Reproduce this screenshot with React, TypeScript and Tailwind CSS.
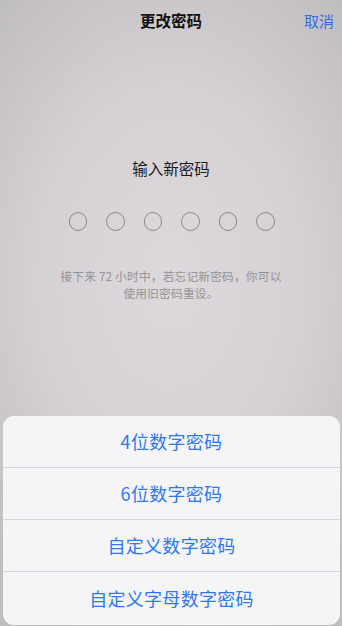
import React from 'react';

const options = ['4位数字密码', '6位数字密码', '自定义数字密码', '自定义字母数字密码'];

export default function App() {
  return (
    <div
      className="relative w-[342px] h-[626px] overflow-hidden bg-[radial-gradient(ellipse_75%_60%_at_50%_45%,#dcd8db_0%,#d5d1d4_50%,#c0bdc1_100%)]"
      style={{ fontFamily: '"Noto Sans CJK SC", "Noto Sans", sans-serif' }}
    >
      {/* nav bar */}
      <div className="relative h-[42px] flex items-center justify-center">
        <span className="text-[15.5px] font-semibold text-[#111] leading-none">更改密码</span>
        <span className="absolute right-[8px] top-[13px] text-[15px] text-[#2f6fe3] leading-none">取消</span>
      </div>

      <div className="flex flex-col items-center pt-[116px]">
        <div className="text-[15.5px] text-[#1a1a1a] leading-[20px]">输入新密码</div>
        <div className="flex gap-[19px] mt-[34px] ml-[1px]">
          {[0, 1, 2, 3, 4, 5].map((i) => (
            <div key={i} className="w-[18.5px] h-[18.5px] rounded-full border-[1.5px] border-[#8c8a8d]" />
          ))}
        </div>
        <div className="mt-[36px] text-[11.7px] text-[#959396] leading-[17px] text-center tracking-[0.2px]">
          接下来 72 小时中，若忘记新密码，你可以
          <br />
          使用旧密码重设。
        </div>
      </div>

      {/* action sheet */}
      <div className="absolute left-[3px] right-[2px] top-[416px] bottom-[1px] rounded-[11px] bg-[#f5f5f7] flex flex-col overflow-hidden">
        {options.map((o, i) => (
          <div
            key={o}
            className={`h-[52px] shrink-0 flex items-center justify-center text-[18px] tracking-[0.3px] text-[#2f78f0] ${i < options.length - 1 ? 'border-b border-[#d8d8dc]' : ''}`}
          >
            {o}
          </div>
        ))}
      </div>
    </div>
  );
}
